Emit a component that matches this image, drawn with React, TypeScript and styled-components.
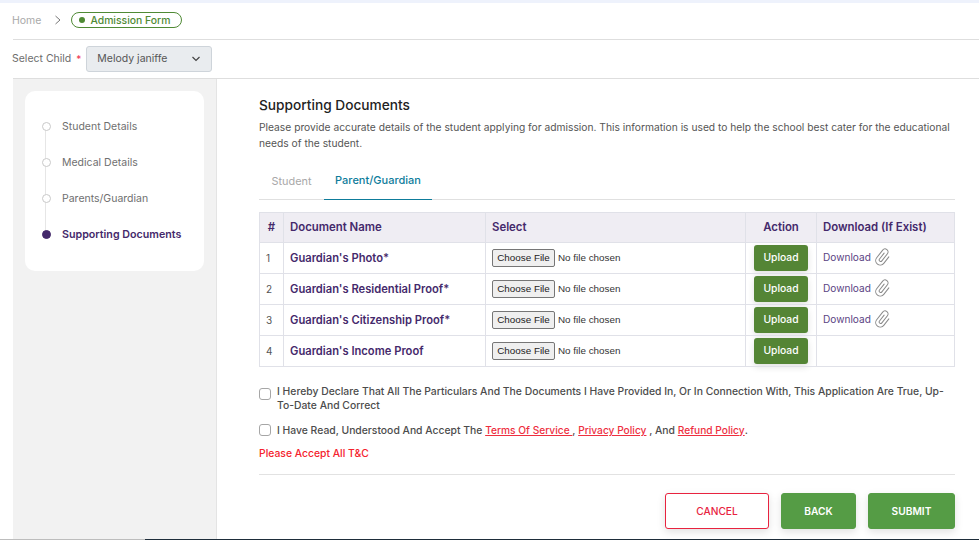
import React from "react";
import styled, { createGlobalStyle } from "styled-components";

const Global = createGlobalStyle`
  html, body { margin: 0; padding: 0; background: #fff; }
  * { box-sizing: border-box; }
  body { font-family: Inter, "Open Sans", "Liberation Sans", sans-serif; }
`;

const Page = styled.div`
  width: 979px;
  height: 540px;
  overflow: hidden;
  display: flex;
  flex-direction: column;
  background: #fff;
  border-top: 3px solid #eef2fc;
`;
const Shell = styled.div`
  flex: 1;
  min-height: 0;
  margin-left: 13px;
  display: flex;
  flex-direction: column;
`;
const Crumbs = styled.nav`
  height: 37px;
  flex: none;
  display: flex;
  align-items: center;
  border-bottom: 1px solid #dedede;
  padding-bottom: 2px;
`;
const Home = styled.span`
  font-size: 10.5px;
  color: #a9a9a9;
  margin-left: -1px;
`;
const Chevron = styled.svg`
  margin: 0 9px 0 13px;
  display: block;
`;
const Pill = styled.span`
  height: 16px;
  width: 111px;
  border: 1px solid #4f8a35;
  border-radius: 8px;
  display: flex;
  align-items: center;
  padding-left: 7px;
  gap: 5px;
  font-size: 10.4px;
  font-weight: 500;
  color: #4f8a35;
`;
const Dot = styled.i`
  width: 6px;
  height: 6px;
  border-radius: 50%;
  background: #4f8a35;
`;
const ChildRow = styled.div`
  height: 39px;
  flex: none;
  display: flex;
  align-items: center;
  border-bottom: 1px solid #dedede;
`;
const ChildLabel = styled.label`
  font-size: 10.5px;
  color: #6d6d6d;
  margin-left: -1px;
  padding-bottom: 1px;
`;
const Star = styled.span`
  color: #f0334f;
  margin: 0 5px 0 5px;
  font-size: 10px;
`;
const Select = styled.div`
  width: 126px;
  height: 26px;
  background: #e9ecef;
  border: 1px solid #ced4da;
  border-radius: 3px;
  display: flex;
  align-items: center;
  justify-content: space-between;
  padding: 0 10px 1px 10px;
  font-size: 10.5px;
  color: #555;
`;
const Main = styled.div`
  flex: 1;
  min-height: 0;
  display: flex;
`;
const Side = styled.aside`
  width: 204px;
  flex: none;
  background: #f2f2f2;
  border-right: 1px solid #e4e4e4;
  padding: 12px 12px 0;
`;
const StepCard = styled.ol`
  list-style: none;
  margin: 0;
  height: 180px;
  background: #fff;
  border-radius: 10px;
  padding: 17px 0 0 17px;
`;
const Step = styled.li<{ $active?: boolean; $last?: boolean }>`
  position: relative;
  height: 36px;
  display: flex;
  align-items: center;
  gap: 11px;
  font-size: ${(p) => (p.$active ? "10.7px" : "10.5px")};
  font-weight: ${(p) => (p.$active ? 600 : 400)};
  color: ${(p) => (p.$active ? "#44296b" : "#6f6f6f")};
  &::before {
    content: "";
    width: 7px;
    height: 7px;
    border-radius: 50%;
    flex: none;
    background: ${(p) => (p.$active ? "#44296b" : "#fff")};
    border: 1px solid ${(p) => (p.$active ? "#44296b" : "#c9c9c9")};
    position: relative;
    z-index: 1;
  }
  &::after {
    content: "";
    display: ${(p) => (p.$last ? "none" : "block")};
    position: absolute;
    left: 3px;
    top: 18px;
    width: 1px;
    height: 36px;
    background: #e6e6e6;
  }
`;
const Content = styled.section`
  flex: 1;
  min-width: 0;
  padding: 18px 24px 0 42px;
  display: flex;
  flex-direction: column;
`;
const Title = styled.h2`
  margin: 0;
  font-size: 13.7px;
  line-height: 16px;
  font-weight: 500;
  color: #222;
`;
const Intro = styled.p`
  margin: 6px 0 0;
  font-size: 10.26px;
  line-height: 16px;
  color: #555;
  width: 700px;
`;
const Tabs = styled.div`
  margin-top: 12px;
  height: 37px;
  flex: none;
  display: flex;
  border-bottom: 1px solid #e0e0e0;
`;
const Tab = styled.div<{ $active?: boolean }>`
  height: 37px;
  width: ${(p) => (p.$active ? "108px" : "65px")};
  display: flex;
  align-items: center;
  justify-content: center;
  padding-bottom: ${(p) => (p.$active ? "3px" : "1px")};
  font-size: ${(p) => (p.$active ? "11px" : "10.9px")};
  font-weight: ${(p) => (p.$active ? 500 : 400)};
  color: ${(p) => (p.$active ? "#0e7c9b" : "#a8a8a8")};
  border-bottom: 1px solid ${(p) => (p.$active ? "#0e7c9b" : "transparent")};
`;
const Table = styled.table`
  margin-top: 12px;
  width: 695px;
  border-collapse: collapse;
  table-layout: fixed;
  flex: none;
`;
const Th = styled.th<{ $center?: boolean; $w: number }>`
  width: ${(p) => p.$w}px;
  height: 30px;
  background: #efedf3;
  border: 1px solid #e0e1e8;
  padding: 0 6px 1px;
  font-size: 11.4px;
  font-weight: 600;
  color: #44296b;
  text-align: ${(p) => (p.$center ? "center" : "left")};
`;
const Td = styled.td<{ $center?: boolean }>`
  height: 31px;
  padding: 0 6px;
  border: 1px solid #e0e1e8;
  text-align: ${(p) => (p.$center ? "center" : "left")};
  vertical-align: middle;
`;
const NumCell = styled(Td)`
  font-size: 10px;
  color: #555;
`;
const DocName = styled(Td)`
  font-size: 11.2px;
  font-weight: 600;
  color: #44296b;
`;
const FileField = styled.div`
  display: flex;
  align-items: center;
  gap: 3px;
`;
const ChooseFile = styled.button`
  width: 63px;
  height: 18px;
  padding: 0 0 1px;
  background: #efefef;
  border: 1px solid #767676;
  border-radius: 2px;
  font-family: "Liberation Sans", Arial, sans-serif;
  font-size: 9.85px;
  color: #222;
`;
const NoFile = styled.span`
  font-family: "Liberation Sans", Arial, sans-serif;
  font-size: 9.85px;
  color: #333;
  padding-bottom: 1px;
`;
const UploadBtn = styled.button`
  width: 54px;
  height: 26px;
  padding: 0 0 2px;
  display: block;
  margin: 0 auto;
  border: 0;
  border-radius: 3px;
  background: #548535;
  box-shadow: 0 3px 7px rgba(0, 0, 0, 0.12);
  color: #fff;
  font-family: inherit;
  font-size: 10.3px;
  font-weight: 500;
`;
const DownloadLink = styled.a`
  display: flex;
  align-items: center;
  gap: 3px;
  padding-bottom: 2px;
  font-size: 10.1px;
  color: #5b4483;
`;
const Declarations = styled.div`
  margin-top: 17px;
  display: flex;
  flex-direction: column;
  gap: 11px;
`;
const Check = styled.label`
  display: flex;
  gap: 6px;
  font-size: 10.36px;
  line-height: 14px;
  font-weight: 500;
  color: #4c4c4c;
`;
const Box = styled.span<{ $top: number }>`
  width: 12px;
  height: 12px;
  margin-top: ${(p) => p.$top}px;
  flex: none;
  border: 1px solid #a6a6a6;
  border-radius: 3px;
  background: #fff;
`;
const Policy = styled.a`
  color: #ee2f3f;
  font-size: 10.2px;
  text-decoration: underline;
`;
const ErrorText = styled.div`
  margin-top: 9px;
  font-size: 10.36px;
  line-height: 14px;
  font-weight: 500;
  color: #f5222d;
`;
const Actions = styled.div`
  margin-top: 14px;
  padding-top: 18px;
  border-top: 1px solid #e2e2e2;
  display: flex;
  justify-content: flex-end;
  gap: 12px;
`;
const ActionBtn = styled.button<{ $w: number; $outline?: boolean }>`
  width: ${(p) => p.$w}px;
  height: 36px;
  padding: 0;
  border-radius: 3px;
  border: 1px solid ${(p) => (p.$outline ? "#e8233f" : "#559c45")};
  background: ${(p) => (p.$outline ? "#fff" : "#559c45")};
  color: ${(p) => (p.$outline ? "#e8233f" : "#fff")};
  box-shadow: 0 3px 8px rgba(0, 0, 0, 0.12);
  font-family: inherit;
  font-size: 10.2px;
  font-weight: ${(p) => (p.$outline ? 500 : 600)};
`;
const BottomEdge = styled.div`
  flex: none;
  height: 1px;
  background: linear-gradient(to right, #bdbdbd 145px, #1e2d3a 145px);
`;

const Clip = () => (
  <svg width="18" height="18" viewBox="0 0 24 24" fill="none" stroke="#8a8a8a" strokeWidth="1.35" strokeLinecap="round">
    <g transform="rotate(38 12 12)">
      <path d="M10 7V17a2 2 0 0 0 4 0V5a4 4 0 0 0-8 0V18a6 6 0 0 0 12 0V7" />
    </g>
  </svg>
);

const docs = [
  { name: "Guardian's Photo*", dl: true },
  { name: "Guardian's Residential Proof*", dl: true },
  { name: "Guardian's Citizenship Proof*", dl: true },
  { name: "Guardian's Income Proof", dl: false },
];

export default function App() {
  return (
    <Page>
      <Global />
      <Shell>
        <Crumbs>
          <Home>Home</Home>
          <Chevron width="8" height="10" viewBox="0 0 8 10" fill="none" stroke="#777" strokeWidth="1">
            <path d="M1.500 1l4.500 4-4.500 4" />
          </Chevron>
          <Pill>
            <Dot />
            Admission Form
          </Pill>
        </Crumbs>
        <ChildRow>
          <ChildLabel>Select Child</ChildLabel>
          <Star>*</Star>
          <Select>
            Melody janiffe
            <svg width="10" height="6" viewBox="0 0 10 6" fill="none" stroke="#444" strokeWidth="1.2">
              <path d="M1.500 1l3.500 3.500L8.500 1" />
            </svg>
          </Select>
        </ChildRow>
        <Main>
          <Side>
            <StepCard>
              <Step>Student Details</Step>
              <Step>Medical Details</Step>
              <Step>Parents/Guardian</Step>
              <Step $active $last>Supporting Documents</Step>
            </StepCard>
          </Side>
          <Content>
            <Title>Supporting Documents</Title>
            <Intro>
              Please provide accurate details of the student applying for admission. This information is used to help the school best cater for the educational needs of the student.
            </Intro>
            <Tabs>
              <Tab>Student</Tab>
              <Tab $active>Parent/Guardian</Tab>
            </Tabs>
            <Table>
              <thead>
                <tr>
                  <Th $w={24} $center>#</Th>
                  <Th $w={202}>Document Name</Th>
                  <Th $w={260}>Select</Th>
                  <Th $w={71} $center>Action</Th>
                  <Th $w={138}>Download (If Exist)</Th>
                </tr>
              </thead>
              <tbody>
                {docs.map((d, i) => (
                  <tr key={d.name}>
                    <NumCell>{i + 1}</NumCell>
                    <DocName>{d.name}</DocName>
                    <Td>
                      <FileField>
                        <ChooseFile>Choose File</ChooseFile>
                        <NoFile>No file chosen</NoFile>
                      </FileField>
                    </Td>
                    <Td $center>
                      <UploadBtn>Upload</UploadBtn>
                    </Td>
                    <Td>
                      {d.dl && (
                        <DownloadLink>
                          Download <Clip />
                        </DownloadLink>
                      )}
                    </Td>
                  </tr>
                ))}
              </tbody>
            </Table>
            <Declarations>
              <Check>
                <Box $top={4} />
                <span>I Hereby Declare That All The Particulars And The Documents I Have Provided In, Or In Connection With, This Application Are True, Up-To-Date And Correct</span>
              </Check>
              <Check>
                <Box $top={1} />
                <span>
                  I Have Read, Understood And Accept The <Policy>Terms Of Service </Policy>, <Policy>Privacy Policy</Policy> , And <Policy>Refund Policy</Policy>.
                </span>
              </Check>
            </Declarations>
            <ErrorText>Please Accept All T&amp;C</ErrorText>
            <Actions>
              <ActionBtn $w={104} $outline>CANCEL</ActionBtn>
              <ActionBtn $w={75}>BACK</ActionBtn>
              <ActionBtn $w={87}>SUBMIT</ActionBtn>
            </Actions>
          </Content>
        </Main>
      </Shell>
      <BottomEdge />
    </Page>
  );
}
